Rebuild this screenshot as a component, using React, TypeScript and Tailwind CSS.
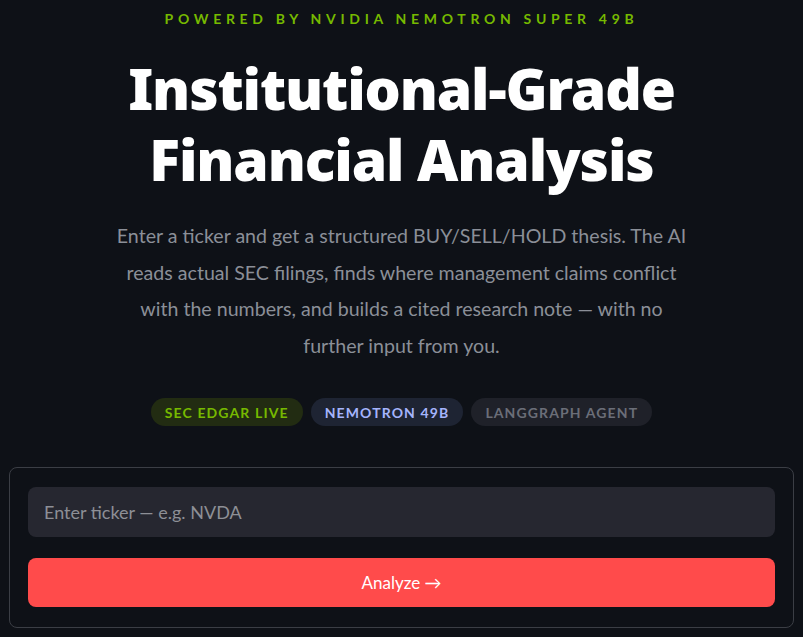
export default function App() {
  return (
    <div
      className="min-h-screen bg-[#0e1117] text-[#fafafa] px-[9px]"
      style={{ fontFamily: "Lato, 'Noto Sans', sans-serif" }}
    >
      <div className="flex flex-col items-center pt-[11px]">
        <p className="text-[14px] font-bold leading-4 tracking-[0.335em] text-[#76b900] uppercase">
          Powered by NVIDIA Nemotron Super 49B
        </p>
        <h1
          className="mt-[26px] text-center text-[57px] font-black leading-[71px] tracking-[-0.02em] text-white"
          style={{ fontFamily: "'Noto Sans', Lato, sans-serif" }}
        >
          Institutional-Grade
          <br />
          Financial Analysis
        </h1>
        <p className="mt-[23px] max-w-[584px] text-center text-[19.6px] leading-[36.5px] text-[#8b8f98]">
          Enter a ticker and get a structured BUY/SELL/HOLD thesis. The AI reads actual SEC filings, finds where
          management claims conflict with the numbers, and builds a cited research note — with no further input from you.
        </p>
        <div className="mt-[34px] flex gap-[8px]">
          <span className="flex h-[28px] items-center rounded-full bg-[#222c12] px-[14px] text-[14px] font-bold tracking-[0.08em] text-[#76b900]">
            SEC EDGAR LIVE
          </span>
          <span className="flex h-[28px] items-center rounded-full bg-[#1e2433] px-[14px] text-[14px] font-bold tracking-[0.08em] text-[#a5b4fc]">
            NEMOTRON 49B
          </span>
          <span className="flex h-[28px] items-center rounded-full bg-[#1f2129] px-[14px] text-[14px] font-bold tracking-[0.08em] text-[#6b6e78]">
            LANGGRAPH AGENT
          </span>
        </div>
      </div>
      <form
        className="mt-[41px] flex flex-col gap-[21px] rounded-[8px] border border-[#3b3e45] px-[18px] pt-[19px] pb-[20px]"
        onSubmit={(e) => e.preventDefault()}
      >
        <input
          type="text"
          placeholder="Enter ticker — e.g. NVDA"
          className="h-[50px] w-full rounded-[8px] bg-[#262730] px-[16px] text-[18px] text-[#fafafa] placeholder:text-[#8d8f96] outline-none"
        />
        <button
          type="submit"
          className="h-[49px] w-full rounded-[8px] bg-[#ff4b4b] text-[17px] text-white"
        >
          Analyze →
        </button>
      </form>
    </div>
  );
}
